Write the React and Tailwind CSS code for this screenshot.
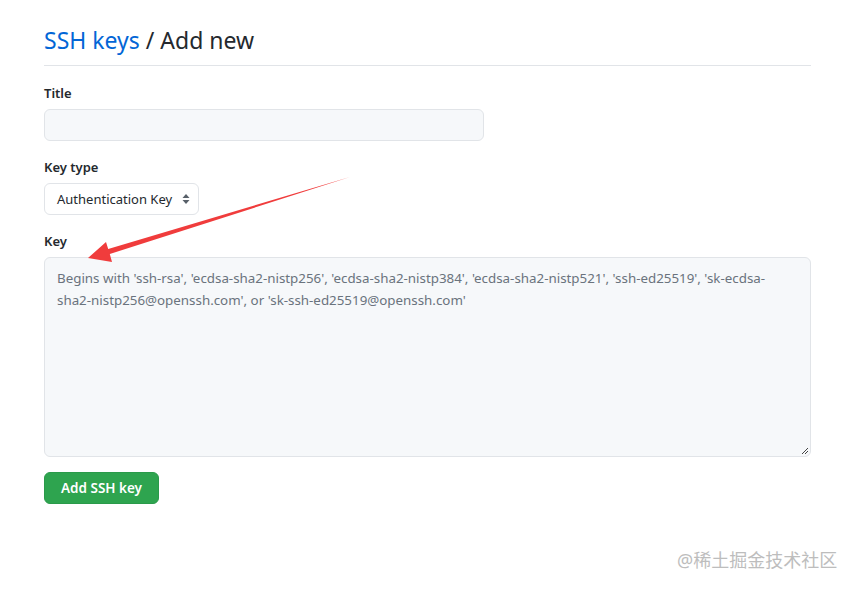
import React from "react";

const font = { fontFamily: '"Noto Sans", "Open Sans", "Noto Sans CJK SC", sans-serif' };

const App = () => {
  return (
    <div className="relative w-[856px] h-[589px] bg-white text-[#24292e] overflow-hidden font-['Noto_Sans','Noto_Sans_CJK_SC',sans-serif]">
      <div className="pl-[44px] pt-[24px] w-[811px]">
        {/* Header */}
        <div className="border-b border-[#e1e4e8] pb-[9px]">
          <h1 className="text-[23px] leading-[32px] font-normal">
            <span className="text-[#0366d6]">SSH keys</span> / Add new
          </h1>
        </div>

        <form className="pt-[17px]">
          <label className="block text-[13px] leading-[20px] font-semibold mb-[6px]">Title</label>
          <input
            type="text"
            className="block w-[440px] h-[32px] bg-[#f6f8fa] border border-[#e1e4e8] rounded-[6px] px-3 text-[14px] outline-none"
          />

          <label className="block text-[13px] leading-[20px] font-semibold mt-[16px] mb-[6px]">Key type</label>
          <div className="flex items-center w-[155px] h-[32px] border border-[#e1e4e8] rounded-[6px] pl-[12px] pr-[8px] bg-white">
            <span className="text-[13px] leading-[20px] flex-1 text-[#24292e]">Authentication Key</span>
            <svg width="8" height="12" viewBox="0 0 8 12" className="text-[#586069]">
              <path d="M4 1 L7.5 5 H0.5 Z" fill="currentColor" />
              <path d="M4 11 L7.5 7 H0.5 Z" fill="currentColor" />
            </svg>
          </div>

          <label className="block text-[13px] leading-[20px] font-semibold mt-[16px] mb-[6px]">Key</label>
          <div className="relative w-[767px] h-[200px] bg-[#f6f8fa] border border-[#e1e4e8] rounded-[6px] px-[12px] pt-[9px]">
            <p className="text-[13.35px] leading-[22px] text-[#6a737d]">
              Begins with 'ssh-rsa', 'ecdsa-sha2-nistp256', 'ecdsa-sha2-nistp384', 'ecdsa-sha2-nistp521', 'ssh-ed25519', 'sk-ecdsa-
              <br />
              sha2-nistp256@openssh.com', or 'sk-ssh-ed25519@openssh.com'
            </p>
            <svg width="8" height="8" viewBox="0 0 8 8" className="absolute right-[1px] bottom-[1px] text-[#444]">
              <path d="M7 1 L1 7 M7 4 L4 7" stroke="currentColor" strokeWidth="1" />
            </svg>
          </div>

          <button
            type="button"
            className="mt-[15px] h-[32px] px-[16px] rounded-[6px] bg-[#2ea44f] border border-[#2a9a4a] text-white text-[13.5px] font-semibold"
          >
            Add SSH key
          </button>
        </form>
      </div>

      {/* Red annotation arrow */}
      <svg className="absolute left-0 top-0 pointer-events-none" width="856" height="589">
        <polygon
          points="350,177 109.8,254 112,262 88,258 106,242 108.2,249"
          fill="#f03c3c"
        />
      </svg>

      {/* Watermark */}
      <div
        className="absolute left-[677px] top-[548px] text-[18px] leading-[24px] text-[#bdbdbd]"
        style={font}
      >
        @稀土掘金技术社区
      </div>
    </div>
  );
};

export default App;
